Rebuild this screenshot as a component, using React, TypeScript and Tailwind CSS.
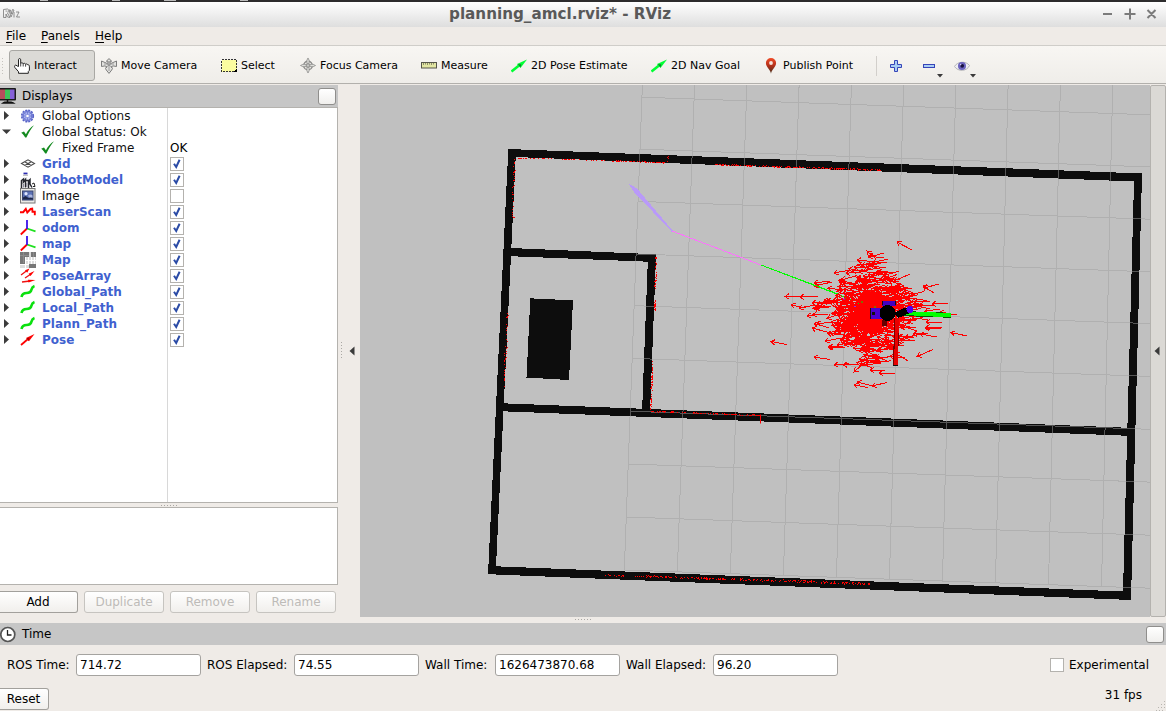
import React from "react";

const UI = "font-['DejaVu_Sans',sans-serif]";

/* ---------- toolbar icons ---------- */

const HandIcon = () => (
  <svg width="16" height="16" viewBox="0 0 16 16">
    <path
      d="M4.500 8.500V1.800C4.500 .1 6.700 .1 6.700 1.800V5.500C7 4.500 9 4.500 9.200 5.800C9.800 5 11.400 5.200 11.600 6.300C12.200 5.700 13.400 5.800 13.800 6.900C15.200 6.700 15.500 7.600 15.400 8.800V12.300L14.300 13.500V15.300H4.500V13.700L.8 9.400C.2 8 .9 6.800 2 7.200C3 7.600 3.500 8.500 4.500 8.500Z"
      fill="#fff"
      stroke="#222"
      strokeWidth="1"
    />
    <path d="M6.700 5.500v3M9.200 5.800v2.700M11.600 6.300v2.400" stroke="#333" strokeWidth=".9" />
  </svg>
);

const MoveIcon = () => (
  <svg width="16" height="16" viewBox="0 0 16 16" fill="none" stroke="#7d7d7d" strokeWidth="1">
    <path d="M8 .6l2.700 2.600H9v2h1.500L15.500 3v5.500l-3.500-.6-2 1 1.500 1.600-.8 1.500L8 15.400 5.300 12l-.8-1.500L6 8.900l-2-1-3.500.6V3l5 2.200H7v-2H5.300z" fill="#e2e2df" />
    <path d="M3 6h10M8 3v10M4.500 9.500l6-4M11.500 9.500l-6-4" stroke="#8d8d8d" strokeWidth=".8" />
  </svg>
);

const SelectIcon = () => (
  <svg width="16" height="13" viewBox="0 0 16 13" shapeRendering="crispEdges">
    <rect x=".5" y=".5" width="15" height="12" fill="#fbfca0" stroke="#333" strokeWidth="1" strokeDasharray="2 1" />
    <path d="M16 9v4h-4z" fill="#000" />
  </svg>
);

const FocusIcon = () => (
  <svg width="17" height="17" viewBox="0 0 17 17" fill="none" stroke="#8a8a88">
    <circle cx="8.500" cy="8.500" r="4.600" strokeWidth="1.500" />
    <circle cx="8.500" cy="8.500" r="1.900" fill="#c8c8c6" />
    <path d="M8.500 .5L9.700 3V6.500H7.300V3zM8.500 16.500L9.700 14V10.500H7.300V14zM.5 8.500L3 7.300H6.500V9.700H3zM16.500 8.500L14 7.300H10.500V9.700H14z" fill="#dededa" strokeWidth=".8" />
  </svg>
);

const MeasureIcon = () => (
  <svg width="16" height="7" viewBox="0 0 16 7">
    <rect x=".5" y=".5" width="15" height="5.500" fill="#e3e7a3" stroke="#55554a" />
    <path d="M2.500 1v2M4.500 1v1.500M6.500 1v2M8.500 1v1.500M10.500 1v2M12.500 1v1.500" stroke="#77775c" strokeWidth=".8" />
  </svg>
);

const GreenArrow = () => (
  <svg width="16" height="14" viewBox="0 0 16 14">
    <path d="M.5 12.500L8 6.500" stroke="#0f3" strokeWidth="2.600" />
    <path d="M6 5L16 .5 9.500 9z" fill="#0f3" />
    <path d="M6.600 5.200l3 3.200.8-3.200z" fill="#0a8a2c" />
  </svg>
);

const PinIcon = () => (
  <svg width="16" height="16" viewBox="0 0 16 16">
    <defs>
      <linearGradient id="pin" x1="0" y1="0" x2="0" y2="1">
        <stop offset="0" stopColor="#f04a26" />
        <stop offset=".5" stopColor="#b0301a" />
        <stop offset="1" stopColor="#43301c" />
      </linearGradient>
    </defs>
    <path d="M8 15.700C7.300 11.500 2.900 9.200 2.900 5.100a5.100 5 0 0 1 10.200 0C13.100 9.200 8.700 11.500 8 15.700z" fill="url(#pin)" />
    <circle cx="8" cy="5" r="1.900" fill="#f5e4dc" />
  </svg>
);

const PlusIcon = () => (
  <svg width="12" height="12" viewBox="0 0 12 12">
    <path d="M4.500.5h3v4h4v3h-4v4h-3v-4h-4v-3h4z" fill="#a9cdf3" stroke="#3644b8" />
  </svg>
);

const MinusIcon = () => (
  <svg width="12" height="4" viewBox="0 0 12 4">
    <rect x=".5" y=".5" width="11" height="3" fill="#a9cdf3" stroke="#3644b8" />
  </svg>
);

const EyeIcon = () => (
  <svg width="16" height="12" viewBox="0 0 16 12">
    <path d="M.5 6.500C3 1.500 12 .5 15.500 5.500 13 11.500 4 12 .5 6.500z" fill="#eeeef2" stroke="#b4b4b8" />
    <circle cx="8" cy="6" r="4" fill="#6a62bd" />
    <circle cx="8.200" cy="5.800" r="1.900" fill="#17113f" />
    <circle cx="6.600" cy="4.600" r=".8" fill="#cfcbf5" />
  </svg>
);

/* ---------- tree icons ---------- */

const GearIcon = () => (
  <svg width="16" height="16" viewBox="0 0 16 16">
    <circle cx="7.500" cy="8" r="5.800" fill="#a3adec" stroke="#5863c6" strokeWidth="1.600" strokeDasharray="2 1.040" />
    <circle cx="7.500" cy="8" r="4.400" fill="#aab4f0" stroke="#5f6acb" strokeWidth="1" />
    <path d="M7.500 3.500v9M3 8h9M4.300 4.800l6.400 6.400M10.700 4.800l-6.400 6.400" stroke="#6a75d0" strokeWidth=".8" />
    <circle cx="7.500" cy="8" r="1.300" fill="#fff" />
  </svg>
);

const CheckIcon = () => (
  <svg width="16" height="16" viewBox="0 0 16 16">
    <path d="M1.200 8.800L4 7.600l1.900 2.600C7.800 6.400 10.300 3.400 14 1.200 11 4.900 8.500 9 6.400 13.600H5.200C4.200 11.700 3 10 1.200 8.800z" fill="#128a1e" />
  </svg>
);

const GridIcon = () => (
  <svg width="16" height="16" viewBox="0 0 16 16" fill="none" stroke="#4a4a4a" strokeWidth="1.100">
    <path d="M1.500 7.500L8 3.800 14.500 7.500 8 11.200zM4.700 5.700l6.500 3.700M11.300 5.700L4.700 9.400" />
  </svg>
);

const RobotIcon = () => (
  <svg width="16" height="16" viewBox="0 0 16 16" fill="none">
    <path d="M3.500 1.500h4" stroke="#2a2ab0" strokeWidth="1.800" />
    <path d="M3 3.300h5" stroke="#bbb" strokeWidth="1.200" />
    <path d="M1.500 16V8.500L3.500 7v3l2-2.500v8M8.500 16V9l1.500-1.500V12l2 3.500M4 8.500h5" stroke="#25272e" strokeWidth="1.500" />
    <path d="M3.500 15.500V12M6.800 15v-4" stroke="#889" strokeWidth="1" />
    <path d="M12 12l2-1 1 3.500h-2" stroke="#222" />
  </svg>
);

const ImageIcon = () => (
  <svg width="16" height="16" viewBox="0 0 16 16">
    <rect x=".5" y=".5" width="14.500" height="14.500" fill="#ebebe7" stroke="#777" />
    <rect x="2.500" y="3" width="10.500" height="9" fill="#5c71b4" stroke="#3b4670" />
    <path d="M3 11.500V9.500l2.500-1.500 3 2 2-1 2.500 1.500v1z" fill="#1d2749" />
    <circle cx="6" cy="5.700" r="1.600" fill="#dfe6ff" />
    <path d="M8 7.500c2-1.500 3.500-1 4.500 0v2H9z" fill="#aab6de" />
  </svg>
);

const LaserIcon = () => (
  <svg width="16" height="16" viewBox="0 0 16 16" fill="none" stroke="#f00" strokeWidth="1.900">
    <path d="M0 9H3.200L5.800 5.600L7.300 9.300L10.600 5.800L12.200 5.500L12.500 8.500H14.800V12" transform="translate(0 -.8)" />
  </svg>
);

const AxesIcon = () => (
  <svg width="16" height="16" viewBox="0 0 16 16" fill="none" strokeWidth="1.800">
    <path d="M7 8.500L.8 14.500" stroke="#f00" />
    <path d="M7 8.500l8.500 2.800" stroke="#1fe01f" />
    <path d="M7 9V0" stroke="#3a10e8" />
  </svg>
);

const MapIcon = () => (
  <svg width="16" height="16" viewBox="0 0 16 16" shapeRendering="crispEdges">
    <rect width="16" height="16" fill="#ddd" />
    <path d="M0 0h9v5H5v7H0zM11 0h5v5h-5zM9 12h7v4H9z" fill="#777" />
    <path d="M5.500 5v11M8.500 5v7M11.500 5v7M14.500 5v7M0 12.500h9M5 8.500h11" stroke="#fff" />
    <path d="M0 3.500h9M3.500 0v11M13.500 0v5" stroke="#8c8c8c" />
  </svg>
);

const PoseArrayIcon = () => (
  <svg width="16" height="16" viewBox="0 0 16 16">
    <path d="M1 7L7 2.500M5 10l6-4M2 14l8-1" stroke="#e11" strokeWidth="1.300" />
    <path d="M5 2.300L9.500 .5 7.200 4.700zM8.500 5.700L14.500 3l-4 5zM8 11.700l7.500.4L8.500 14.500z" fill="#f00" />
  </svg>
);

const PathIcon = () => (
  <svg width="16" height="16" viewBox="0 0 16 16" fill="none">
    <path d="M1.500 13C2 10.500 4 9 6.500 9S11 8 11.500 5.500 13 2.500 14.500 2" stroke="#0be00f" strokeWidth="2.600" />
  </svg>
);

const PoseIcon = () => (
  <svg width="16" height="16" viewBox="0 0 16 16">
    <path d="M1 13L8 7" stroke="#f00" strokeWidth="1.800" />
    <path d="M6 6L14.500 2 9 9.300z" fill="#f00" />
    <path d="M6.500 6l2.300 3 .7-3.300z" fill="#a00" />
  </svg>
);

const MonitorIcon = () => (
  <svg width="16" height="16" viewBox="0 0 16 16">
    <rect x="-3" y="0" width="19" height="12.500" rx="1" fill="#1a1a1a" />
    <rect x="0" y="1.500" width="5" height="9.500" fill="#b84c5c" />
    <rect x="5" y="1.500" width="5" height="9.500" fill="#3fc25a" />
    <rect x="10" y="1.500" width="4.500" height="9.500" fill="#8560d8" />
    <path d="M7.500 12v2M3 15c1.500-1.200 8-1.200 10 0z" stroke="#111" strokeWidth="1.500" />
  </svg>
);

const ClockIcon = () => (
  <svg width="16" height="17" viewBox="0 0 16 17" fill="none" className="mt-px">
    <circle cx="7.800" cy="8.500" r="7" fill="#fff" stroke="#555" strokeWidth="1.700" />
    <path d="M7.500 4v5h4" stroke="#222" strokeWidth="1.300" />
  </svg>
);

/* ---------- widgets ---------- */

function Tool({ icon, label, width, active }: { icon: React.ReactNode; label: string; width: string; active?: boolean }) {
  return (
    <div
      className={`flex h-[31px] shrink-0 items-center gap-1 rounded-[3px] border pl-1 ${width} ${
        active ? "mr-px border-[#a9a8a4] bg-[#dbdad6]" : "border-transparent"
      }`}
    >
      <span className="flex w-4 shrink-0 justify-center">{icon}</span>
      <span className="text-[11px] leading-4 whitespace-nowrap">{label}</span>
    </div>
  );
}

function Check({ on }: { on: boolean }) {
  return (
    <span className="flex size-[14px] items-center justify-center border border-[#b4b2ae] bg-white">
      {on && (
        <svg width="10" height="10" viewBox="0 0 10 10">
          <path d="M2 4.800L4.200 8 7.600 .8" fill="none" stroke="#2b4ba6" strokeWidth="2" />
        </svg>
      )}
    </span>
  );
}

type Row = { icon: React.ReactNode; label: string; bold?: boolean; open?: boolean; child?: boolean; value?: React.ReactNode };

const rows: Row[] = [
  { icon: <GearIcon />, label: "Global Options" },
  { icon: <CheckIcon />, label: "Global Status: Ok", open: true },
  { icon: <CheckIcon />, label: "Fixed Frame", child: true, value: "OK" },
  { icon: <GridIcon />, label: "Grid", bold: true, value: <Check on /> },
  { icon: <RobotIcon />, label: "RobotModel", bold: true, value: <Check on /> },
  { icon: <ImageIcon />, label: "Image", value: <Check on={false} /> },
  { icon: <LaserIcon />, label: "LaserScan", bold: true, value: <Check on /> },
  { icon: <AxesIcon />, label: "odom", bold: true, value: <Check on /> },
  { icon: <AxesIcon />, label: "map", bold: true, value: <Check on /> },
  { icon: <MapIcon />, label: "Map", bold: true, value: <Check on /> },
  { icon: <PoseArrayIcon />, label: "PoseArray", bold: true, value: <Check on /> },
  { icon: <PathIcon />, label: "Global_Path", bold: true, value: <Check on /> },
  { icon: <PathIcon />, label: "Local_Path", bold: true, value: <Check on /> },
  { icon: <PathIcon />, label: "Plann_Path", bold: true, value: <Check on /> },
  { icon: <PoseIcon />, label: "Pose", bold: true, value: <Check on /> },
];

function TreeRow({ row }: { row: Row }) {
  return (
    <div className="flex h-4 items-center">
      <div className="flex h-4 w-[167px] shrink-0 items-center">
        <span className={`shrink-0 ${row.child ? "w-10" : "w-5"}`}>
          {!row.child && (
            <svg width="14" height="16" viewBox="0 0 14 16">
              {row.open ? <path d="M2 5.500h9L6.500 10z" fill="#3c3c3c" /> : <path d="M4 3v9l5-4.500z" fill="#3c3c3c" />}
            </svg>
          )}
        </span>
        <span className="flex w-[22px] shrink-0">{row.icon}</span>
        <span
          className={`text-xs leading-4 whitespace-nowrap ${row.bold ? "font-bold text-[#3f61cf]" : "text-[#111]"}`}
        >
          {row.label}
        </span>
      </div>
      <div className="flex pl-[3px] text-xs leading-4">{row.value}</div>
    </div>
  );
}

function Btn({ label, width, disabled, flush }: { label: string; width: string; disabled?: boolean; flush?: boolean }) {
  return (
    <button
      className={`flex h-[22px] shrink-0 items-center justify-center border bg-linear-to-b from-white to-[#f1efec] text-xs leading-4 ${width} ${
        disabled ? "border-[#c6c4c0] text-[#bdbbb8]" : "border-[#a2a09c] text-black"
      } ${flush ? "rounded-r-[3px] border-l-0 pr-px" : "rounded-[3px]"}`}
    >
      {label}
    </button>
  );
}

function Field({ label, value, labelW }: { label: string; value: string; labelW: string }) {
  return (
    <div className="flex items-center">
      <span className={`shrink-0 whitespace-nowrap ${labelW}`}>{label}</span>
      <span className="flex h-[22px] w-[125px] items-center rounded-[3px] border border-[#a5a3a0] bg-white pl-[3px]">{value}</span>
    </div>
  );
}

/* ---------- 3D view ---------- */

function makeRandom(seed: number) {
  let s = seed;
  return () => {
    s = (s * 1664525 + 1013904223) % 4294967296;
    return s / 4294967296;
  };
}

function arrowPath(x: number, y: number, tx: number, ty: number) {
  const a = Math.atan2(y - ty, x - tx);
  const h = 4.8;
  const p = (d: number) => `${(x - h * Math.cos(a + d)).toFixed(1)} ${(y - h * Math.sin(a + d)).toFixed(1)}`;
  return `M${tx.toFixed(1)} ${ty.toFixed(1)}L${x.toFixed(1)} ${y.toFixed(1)}M${p(0.6)}L${x.toFixed(1)} ${y.toFixed(1)}L${p(-0.6)}`;
}

/* arrows away from the dense core: head x, head y, tail x, tail y */
const strays = [
  [897, 242, 912, 250], [771, 341.5, 787, 344.5], [814, 357, 830, 359.5], [951, 332.5, 967, 336],
  [917, 356.5, 933, 349.5], [932, 304, 948, 303], [926, 327, 942, 328], [926, 322, 942, 322],
  [785, 296.5, 802, 296], [920, 334, 937, 337], [870, 370, 885, 370.5], [854, 372, 865, 362],
  [879, 373, 895, 373.5], [854, 385, 868, 387.5], [857, 382, 873, 386], [872, 386, 887, 382.5],
  [867, 251, 876, 259], [834, 273, 850, 270], [857, 260, 887, 263], [924, 288, 939, 284],
  [923, 286, 934, 293], [791, 305, 806, 308], [799, 308, 815, 305], [800, 297, 818, 296],
  [807, 316, 822, 314], [812, 328, 827, 332], [834, 365, 849, 363.5], [843, 365, 858, 364],
  [814, 283, 830, 281], [814, 286, 832, 282], [914, 302, 930, 301], [895, 353, 908, 361],
  [925, 328, 941, 328], [914, 305, 930, 309], [940, 312, 957, 315], [825, 341, 842, 338],
  [829, 347, 843, 346], [859, 271, 874, 273], [863, 276, 880, 279], [831, 322, 846, 325],
  [817, 324, 832, 322], [812, 303, 830, 302], [871, 266, 886, 268], [868, 275, 890, 272],
  [883, 276, 899, 271], [894, 281, 910, 274], [828, 347, 845, 348], [860, 364, 876, 361],
  [890, 356, 905, 358], [913, 334, 928, 333], [905, 338, 920, 334],
];

function buildCloud() {
  const r = makeRandom(77);
  const out: string[] = [];
  const gauss = () => r() + r() + r() + r() + r() + r() - 3;
  for (let i = 0; i < 540; i++) {
    const dx = gauss() * 32;
    const dy = gauss() * 35;
    const a = gauss() * 0.3;
    if (Math.abs(dx) / 62 + Math.abs(dy) / 62 > 1) continue;
    const x = 865 + dx;
    const y = 313 + dy;
    out.push(arrowPath(x, y, x + 15.5 * Math.cos(a), y + 15.5 * Math.sin(a)));
  }
  strays.forEach(([x, y, tx, ty]) => out.push(arrowPath(x, y, tx, ty)));
  return out.join("");
}

function scanDots(seed: number, runs: number[][]) {
  const r = makeRandom(seed);
  let d = "";
  runs.forEach(([x1, y1, x2, y2, density, jitter]) => {
    const n = Math.round(Math.hypot(x2 - x1, y2 - y1) * density);
    const flat = Math.abs(x2 - x1) > Math.abs(y2 - y1);
    for (let i = 0; i < n; i++) {
      const t = r();
      const j = (r() - 0.5) * jitter;
      const x = Math.round(x1 + (x2 - x1) * t + (flat ? 0 : j));
      const y = Math.round(y1 + (y2 - y1) * t + (flat ? j : 0));
      d += `M${x} ${y}h1v1h-1z`;
    }
  });
  return d;
}

const scans = scanDots(5, [
  [516, 158, 552, 158.5, 0.7, 0.4], [562, 159, 605, 160, 0.5, 0.6], [612, 160.7, 645, 161.3, 0.9, 0.8],
  [645, 161.7, 664, 162.4, 1.6, 0.6], [715, 164, 780, 166.3, 1.2, 1], [780, 166.3, 880, 169.8, 1.2, 1.2],
  [514, 157, 512.5, 218, 0.5, 2.4], [507, 312, 504, 388, 0.35, 2], [504.5, 350, 504, 388, 0.3, 1],
  [655.5, 256, 655, 290, 1, 1.6], [655, 298, 654, 310, 1.6, 1.6], [652, 360, 650.5, 411, 1, 1.6],
  [651, 411, 725, 413.5, 0.7, 1], [725, 413.8, 760, 415, 1.3, 0.8], [668, 155, 667.5, 162, 0.5, 1],
  [604, 574.5, 626, 575.5, 0.6, 1], [634, 575.5, 780, 580.5, 0.9, 1.8], [780, 580, 870, 583.8, 1.1, 2],
]);

const cloud = buildCloud();

function gridPath() {
  let d = "";
  for (let k = 0; k < 10; k++) d += `M${(642.4 + 52.25 * k).toFixed(1)} 85L${(624.3 + 53.02 * k).toFixed(1)} ${(570 + k * 1.9).toFixed(1)}`;
  const lefts = [
    [641.9, 97.2], [640.3, 149.2], [638.4, 201.4], [636.4, 254], [634.6, 305.7],
    [632.5, 358.4], [630.4, 411.3], [628.2, 464], [626.3, 517], [624.3, 570],
  ];
  lefts.forEach(([x, y]) => (d += `M${x} ${y}L1150 ${(y + (1150 - x) * 0.0347).toFixed(1)}`));
  return d;
}

const grid = gridPath();

function Scene() {
  return (
    <svg width="790" height="532" viewBox="360 85 790 532" className="block">
      <rect x="360" y="85" width="790" height="532" fill="#c0c0c0" />
      <g fill="#0d0d0d" shapeRendering="crispEdges">
        <path
          fillRule="evenodd"
          d="M508.300 149L1142 173.500L1131 600L488 574.200ZM515.700 157L496 566.300L1123 591.500L1134 181.500Z"
        />
        <path d="M500 403.200L1129 427.800V435.800L500 411.200Z" />
        <path d="M510 248L656 254.300V262L510 256.200Z" />
        <path d="M648 256H656L650 413H642Z" />
        <path d="M530.300 298.300L573 300.400L569 380L526.500 377.600Z" />
      </g>
      <path d={grid} fill="none" stroke="#a0a0a0" strokeOpacity=".5" strokeWidth="1" shapeRendering="crispEdges" />
      <path d={scans} fill="#f00" shapeRendering="crispEdges" />
      <path d="M760.500 414.500v9" stroke="#f00" />
      <path d="M628.500 183.500L637 188.500L673 231L671.500 231.500L634 192Z" fill="#b99af8" shapeRendering="crispEdges" />
      <g fill="none" shapeRendering="crispEdges">
        <path d="M672 231L761 265" stroke="#fb74fb" />
        <path d="M761 265L850 299" stroke="#0f0" />
      </g>
      <ellipse cx="871" cy="311" rx="17" ry="20" fill="#f00" />
      <path d={cloud} fill="none" stroke="#f00" strokeWidth="1" shapeRendering="crispEdges" />
      <path d="M761 265L838 294" stroke="#0f0" fill="none" shapeRendering="crispEdges" />
      <g shapeRendering="crispEdges">
        <path d="M903 311L951 312.800v5L903 316z" fill="#005a00" />
        <path d="M905 311.500L951 313v4.500L905 315z" fill="#0f0" />
        <path d="M894.500 318h5L897.800 366h-5z" fill="#700" />
        <path d="M895.500 318h3.500L897.500 365h-3.500z" fill="#e80000" />
        <path d="M892.500 365.500h5" stroke="#111" />
        <rect x="870" y="308" width="12" height="11" fill="#4b00cf" />
        <rect x="870" y="308" width="1" height="11" fill="#111" />
        <rect x="872" y="312" width="3" height="3" fill="#111" />
        <rect x="882" y="301" width="14" height="5" fill="#4400c0" />
        <path d="M882 301h1v4h-1zM895 301h1v4h-1z" fill="#111" />
        <rect x="882" y="320" width="5" height="6" fill="#600" />
        <path d="M894 313L905 307.500L911 309L910 313L904 315.500L898 318z" fill="#000" />
        <circle cx="887.500" cy="313" r="8" fill="#000" />
        <circle cx="910" cy="309.500" r="3.500" fill="#5000f0" />
      </g>
      <path d="M850 299l1 1M858 303l1 1M861 302h2M874 307h2M845 298h1" stroke="#0d0" />
      <path d="M843 299h2M854 306.500h2" stroke="#92f" />
    </svg>
  );
}

const Dots = ({ vertical }: { vertical?: boolean }) =>
  vertical ? (
    <span className="h-[18px] w-px bg-[repeating-linear-gradient(180deg,#aaa8a4_0_1px,transparent_1px_3px)]" />
  ) : (
    <span className="h-px w-[17px] bg-[repeating-linear-gradient(90deg,#aaa8a4_0_1px,transparent_1px_3px)]" />
  );

export default function App() {
  return (
    <div className={`flex h-[711px] w-[1166px] flex-col overflow-hidden bg-[#efebe7] text-black ${UI}`}>
      {/* strip of the window behind */}
      <div className="flex h-[2px] shrink-0 bg-[#2e2d2e]">
        <span className="ml-10 h-px w-2 bg-[#bbb]" />
        <span className="ml-16 h-px w-2 bg-[#bbb]" />
        <span className="ml-11 h-px w-3 bg-[#bbb]" />
        <span className="ml-16 h-px w-2 bg-[#bbb]" />
      </div>

      {/* title bar */}
      <div className="flex h-[25px] shrink-0 items-center justify-between bg-linear-to-b from-white to-[#dedede] pr-[9px] pl-[3px] text-[#595959]">
        <svg width="17" height="11" viewBox="0 0 17 11" fill="none" stroke="#777" strokeWidth=".8" className="mb-0.5">
          <path d="M.5 9.500V1.500L4.500 1C6.500 1.500 6 4 4.500 5L7 9.500 4.500 9 3 6v3.500zM2.500 3l2 .2M6 2l2 7 3-7-1.500-.5L8.200 6 7.500 2zM11 4v5.500M13 4h3l-2.500 5H17" />
        </svg>
        <span className="mr-[2px] pb-[2px] text-center text-[15.2px] leading-[20px] font-bold whitespace-nowrap">
          planning_amcl.rviz* - RViz
        </span>
        <svg width="55" height="12" viewBox="0 0 55 12" stroke="#7b7b7b" strokeWidth="2" fill="none" className="mb-0.5">
          <path d="M1 6h9M22.500 6h11M28 .5v11M45.500 2l8 8M53.500 2l-8 8" />
        </svg>
      </div>

      {/* menu bar */}
      <div className="flex h-[19px] shrink-0 items-center border-b border-[#cfcdc9] pl-[6px] text-xs leading-4">
        <span className="w-[35px]"><u className="underline-offset-2">F</u>ile</span>
        <span className="w-[54px]"><u className="underline-offset-2">P</u>anels</span>
        <span><u className="underline-offset-2">H</u>elp</span>
      </div>

      {/* toolbar */}
      <div className="flex h-[38px] shrink-0 items-center border-b border-[#b2b0ac] bg-linear-to-b from-[#f8f6f3] to-[#efede9] pt-[2px]">
        <span className="ml-[1px] h-[18px] w-[4px] bg-[radial-gradient(circle,#c6c3be_0.6px,transparent_0.8px)] bg-[length:3px_3px]" />
        <span className="w-1" />
        <Tool active icon={<HandIcon />} label="Interact" width="w-[86px]" />
        <Tool icon={<MoveIcon />} label="Move Camera" width="w-[120px]" />
        <Tool icon={<SelectIcon />} label="Select" width="w-[79px]" />
        <Tool icon={<FocusIcon />} label="Focus Camera" width="w-[121px]" />
        <Tool icon={<MeasureIcon />} label="Measure" width="w-[90px]" />
        <Tool icon={<GreenArrow />} label="2D Pose Estimate" width="w-[140px]" />
        <Tool icon={<GreenArrow />} label="2D Nav Goal" width="w-[112px]" />
        <Tool icon={<PinIcon />} label="Publish Point" width="w-[118px]" />
        <span className="mr-[13px] h-5 w-px bg-[#d2cfcb]" />
        <PlusIcon />
        <span className="ml-[21px] flex w-[31px] items-center">
          <MinusIcon />
          <svg width="6" height="4" viewBox="0 0 6 4" className="mt-5 ml-[2px]"><path d="M0 0h6L3 3.500z" fill="#3a3a3a" /></svg>
        </span>
        <span className="flex items-center">
          <EyeIcon />
          <svg width="6" height="4" viewBox="0 0 6 4" className="mt-5"><path d="M0 0h6L3 3.500z" fill="#3a3a3a" /></svg>
        </span>
      </div>

      <div className="mt-px flex h-[532px] shrink-0">
        {/* displays panel */}
        <div className="flex w-[338px] shrink-0 flex-col">
          <div className="flex h-[22px] shrink-0 items-center bg-[#c6c6c6] pr-[2px] text-xs">
            <MonitorIcon />
            <span className="ml-[6px] flex-1 leading-4">Displays</span>
            <span className="h-[17px] w-[18px] rounded-[3px] border border-[#8f8e8c] bg-linear-to-b from-white to-[#f0efed]" />
          </div>
          <div className="flex h-[396px] shrink-0 flex-col border-y border-r border-[#b4b2ae] bg-white bg-[linear-gradient(#d8d8d8,#d8d8d8)] bg-[length:1px_100%] bg-[position:167px_0] bg-no-repeat">
            {rows.map((r) => (
              <TreeRow key={r.label} row={r} />
            ))}
          </div>
          <div className="flex h-1 shrink-0 items-center justify-center"><Dots /></div>
          <div className="h-[78px] shrink-0 border-y border-r border-[#b4b2ae] bg-white" />
          <div className="mt-[6px] flex gap-[6px]">
            <Btn label="Add" width="w-[78px]" flush />
            <Btn label="Duplicate" width="w-[80px]" disabled />
            <Btn label="Remove" width="w-[80px]" disabled />
            <Btn label="Rename" width="w-[80px]" disabled />
          </div>
        </div>

        <div className="flex w-[22px] shrink-0 items-center gap-[7px] pl-[3px]">
          <Dots vertical />
          <svg width="6" height="10" viewBox="0 0 6 10"><path d="M5.500 .5v9L.5 5z" fill="#3a3a3a" /></svg>
        </div>

        <Scene />

        <div className="flex w-4 items-center rounded-[2px] border border-[#b4b2ae] bg-[#dbd9d5] pl-[3px]">
          <svg width="6" height="10" viewBox="0 0 6 10"><path d="M5.500 .5v9L.5 5z" fill="#3a3a3a" /></svg>
        </div>
      </div>

      <div className="flex h-[6px] shrink-0 items-center justify-center pb-px"><Dots /></div>

      {/* time panel */}
      <div className="flex h-[22px] shrink-0 items-center bg-[#c6c6c6] pr-[2px] text-xs">
        <ClockIcon />
        <span className="ml-[6px] flex-1 leading-4">Time</span>
        <span className="h-[17px] w-[18px] rounded-[3px] border border-[#8f8e8c] bg-linear-to-b from-white to-[#f0efed]" />
      </div>
      <div className="flex h-[40px] shrink-0 items-center pl-[7px] text-xs leading-4">
        <Field label="ROS Time:" value="714.72" labelW="w-[69px]" />
        <span className="w-[6px]" />
        <Field label="ROS Elapsed:" value="74.55" labelW="w-[87px]" />
        <span className="w-[6px]" />
        <Field label="Wall Time:" value="1626473870.68" labelW="w-[70px]" />
        <span className="w-[6px]" />
        <Field label="Wall Elapsed:" value="96.20" labelW="w-[87px]" />
        <span className="ml-auto size-[14px] border border-[#b4b2ae] bg-white" />
        <span className="ml-[5px] w-[97px] whitespace-nowrap">Experimental</span>
      </div>
      <div className="mt-[3px] flex flex-1 items-start justify-between text-xs leading-4">
        <Btn label="Reset" width="w-[49px]" flush />
        <div className="flex h-full">
          <span className="-mt-px pr-[14px]">31 fps</span>
          <svg width="10" height="10" viewBox="0 0 10 10" className="mt-auto" fill="#b8b5b0">
            <path d="M8 0h1v1h-1zM5 3h1v1h-1zM8 3h1v1h-1zM2 6h1v1h-1zM5 6h1v1h-1zM8 6h1v1h-1zM0 9h1v1h-1zM3 9h1v1h-1zM6 9h1v1h-1z" />
          </svg>
        </div>
      </div>
    </div>
  );
}
